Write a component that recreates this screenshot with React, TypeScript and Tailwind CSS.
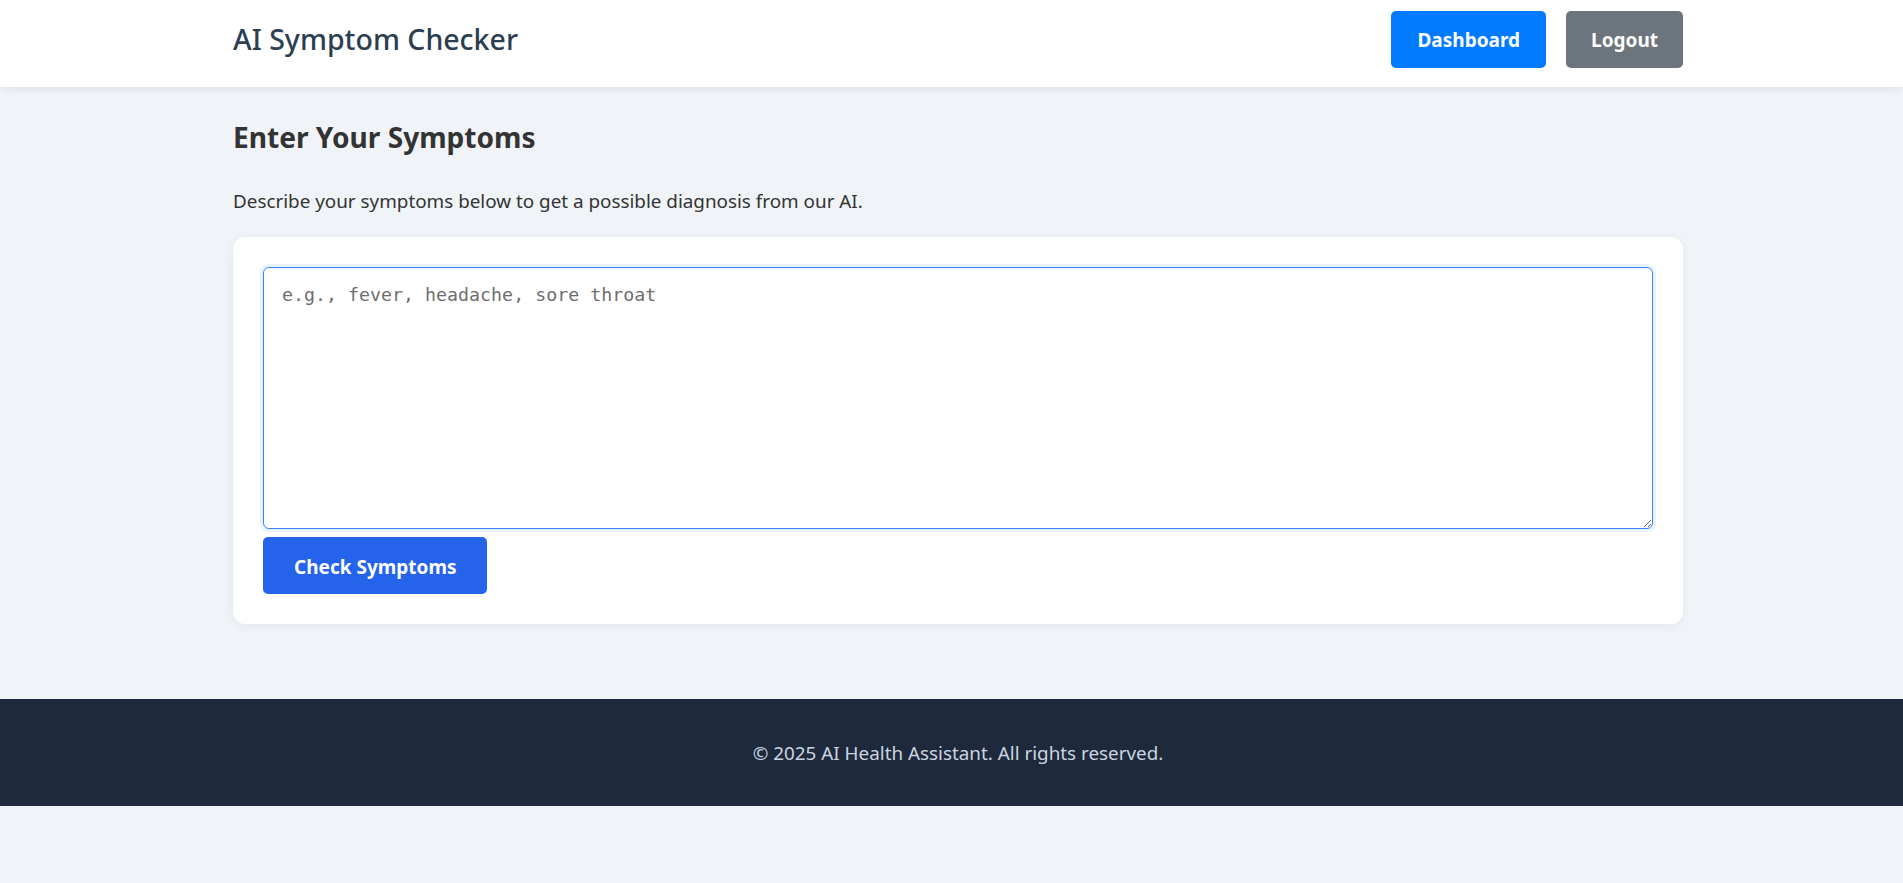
import { useState } from 'react'

export default function App() {
  const [symptoms, setSymptoms] = useState('')

  return (
    <div className="min-h-[883px] bg-[#f0f3f7] font-['Noto_Sans',sans-serif] text-[#333]">
      {/* Header */}
      <header className="h-[87px] bg-white shadow-[0_2px_8px_rgba(0,0,0,0.08)] relative z-10">
        <div className="ml-[233px] w-[1450px] pt-[11px] flex items-center justify-between">
          <h1 className="text-[28.5px] leading-[57px] text-[#2c3e50] font-medium">AI Symptom Checker</h1>
          <nav className="flex gap-[20px]">
            <button className="h-[57px] px-[26px] pt-[2px] rounded-[5px] bg-[#007bff] text-white text-[19px] font-bold">Dashboard</button>
            <button className="h-[57px] px-[25px] pt-[2px] rounded-[5px] bg-[#6c757d] text-white text-[19px] font-bold">Logout</button>
          </nav>
        </div>
      </header>

      {/* Main */}
      <main className="ml-[233px] w-[1450px] pt-[33px]">
        <h2 className="text-[28.1px] leading-[34px] font-bold text-[#333]">Enter Your Symptoms</h2>
        <p className="mt-[33px] text-[18.85px] leading-[28px] text-[#333]">
          Describe your symptoms below to get a possible diagnosis from our AI.
        </p>

        <div className="mt-[22px] bg-white rounded-[12px] p-[30px] shadow-[0_2px_12px_rgba(0,0,0,0.06)]">
          <textarea
            value={symptoms}
            onChange={e => setSymptoms(e.target.value)}
            placeholder="e.g., fever, headache, sore throat"
            className="block w-full h-[262px] rounded-[6px] border border-[#3b82f6] ring-[3px] ring-[#eaf2fe] px-[18px] py-[14px] font-['DejaVu_Sans_Mono',monospace] text-[18.3px] leading-[26px] text-[#333] placeholder:text-[#6e6e6e] outline-none"
          />
          <button className="mt-[8px] h-[57px] px-[31px] pt-[3px] rounded-[5px] bg-[#2563eb] text-white text-[19px] font-bold">
            Check Symptoms
          </button>
        </div>
      </main>

      {/* Footer */}
      <footer className="mt-[75px] h-[107px] bg-[#1e293b] flex items-center justify-center pl-[13px] pt-[2px]">
        <p className="text-[18.85px] text-[#cbd5e1]">© 2025 AI Health Assistant. All rights reserved.</p>
      </footer>
    </div>
  )
}
